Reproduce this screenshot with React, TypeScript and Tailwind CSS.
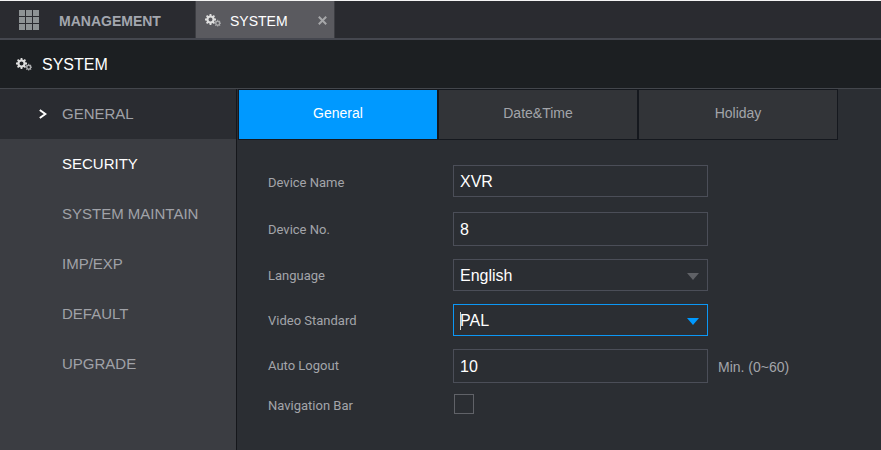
import React from "react";
import clsx from "clsx";

function gearPath(cx: number, cy: number, outer: number, inner: number, hole: number, teeth: number) {
  const step = (Math.PI * 2) / teeth;
  const point = (r: number, a: number) =>
    `${(cx + r * Math.cos(a)).toFixed(2)} ${(cy + r * Math.sin(a)).toFixed(2)}`;
  const points: string[] = [];
  for (let i = 0; i < teeth; i++) {
    const a = i * step;
    points.push(
      point(inner, a - step * 0.3),
      point(outer, a - step * 0.2),
      point(outer, a + step * 0.2),
      point(inner, a + step * 0.3),
    );
  }
  const ring = `M${cx - hole} ${cy}a${hole} ${hole} 0 1 0 ${hole * 2} 0a${hole} ${hole} 0 1 0 ${-hole * 2} 0Z`;
  return `M${points.join("L")}Z${ring}`;
}

function Gears() {
  return (
    <svg width="16" height="13" viewBox="0 0 16 13" fillRule="evenodd" aria-hidden="true" className="shrink-0">
      <path d={gearPath(5.5, 5.5, 5.6, 4.2, 2, 8)} fill="#dedede" />
      <path d={gearPath(12.7, 9.2, 3.4, 2.6, 1.2, 8)} fill="#a9aaac" />
    </svg>
  );
}

const menu = ["GENERAL", "SECURITY", "SYSTEM MAINTAIN", "IMP/EXP", "DEFAULT", "UPGRADE"];
const tabs = ["General", "Date&Time", "Holiday"];

const box = "w-full rounded-none border bg-transparent px-1.5 pt-0.5 text-base text-white outline-none";

function Row({ id, label, tall, children }: { id: string; label: string; tall?: boolean; children: React.ReactNode }) {
  return (
    <div className={clsx("flex items-start", tall ? "h-9" : "h-[34px]")}>
      <label
        htmlFor={id}
        className={clsx(
          "w-[185px] shrink-0 font-[Roboto,sans-serif] text-[13px] text-[#a3a5aa]",
          tall ? "leading-9" : "leading-[34px]",
        )}
      >
        {label}
      </label>
      {children}
    </div>
  );
}

function Select({ id, value, options, active }: { id: string; value: string; options: string[]; active?: boolean }) {
  return (
    <div className="relative w-[255px]">
      <select
        id={id}
        defaultValue={value}
        className={clsx(box, "h-8 appearance-none", active ? "border-[#0c97f5]" : "border-[#4b4e58]")}
      >
        {options.map((o) => (
          <option key={o}>{o}</option>
        ))}
      </select>
      {active && <span className="absolute top-2 left-[7px] h-[18px] w-px bg-[#d8d4cc]" />}
      <svg
        width="12"
        height="7"
        viewBox="0 0 12 7"
        aria-hidden="true"
        className={clsx("pointer-events-none absolute top-3.5 right-[9px]", active ? "text-[#0099ff]" : "text-[#5f6166]")}
      >
        <path d="M0 0H12L6 7Z" fill="currentColor" />
      </svg>
    </div>
  );
}

export default function App() {
  return (
    <div className="flex min-h-screen flex-col border-t border-[#f4f4f4] bg-[#2b2e33] font-['Liberation_Sans',Arial,sans-serif]">
      <nav className="flex h-[39px] shrink-0 border-b-2 border-[#45474f] bg-[#2a2b30]">
        <button className="flex w-[195px] items-center pl-[19px] text-sm font-bold text-[#a3a6ae]">
          <svg width="20" height="20" viewBox="0 0 20 20" fill="#8e9395" aria-hidden="true" className="mr-5 shrink-0">
            {[0, 7, 14].map((y) => [0, 7, 14].map((x) => <rect key={`${x}-${y}`} x={x} y={y} width="6" height="6" />))}
          </svg>
          <span className="pt-0.5">MANAGEMENT</span>
        </button>
        <div className="flex w-[140px] items-center border-x border-[#3c3d42] bg-[#5a5a5f] pt-0.5 pr-[7px] pl-[9px] text-white">
          <button className="flex flex-1 items-center gap-[9px] text-sm">
            <Gears />
            SYSTEM
          </button>
          <button aria-label="Close" className="text-[#a6a7a9]">
            <svg width="9" height="9" viewBox="0 0 9 9" stroke="currentColor" strokeWidth="2" aria-hidden="true">
              <path d="M.8 .8L8.2 8.2M8.2 .8L.8 8.2" />
            </svg>
          </button>
        </div>
      </nav>

      <header className="flex h-[49px] shrink-0 items-center gap-[10px] border-b border-[#43464c] bg-[#1c1f22] pl-4 text-white">
        <Gears />
        <h1 className="pt-0.5 text-base">SYSTEM</h1>
      </header>

      <div className="flex flex-1">
        <aside className="w-[237px] shrink-0 border-r border-[#15171b] bg-[#3b3d42]">
          {menu.map((item, i) => (
            <a
              key={item}
              href="#"
              className={clsx(
                "flex h-[50px] items-center pl-[39px] text-[15px]",
                i === 0 && "bg-[#2a2c31]",
                i === 1 ? "text-white" : "text-[#a0a2a8]",
              )}
            >
              <span className="w-[23px]">
                {i === 0 && (
                  <svg width="8" height="10" viewBox="0 0 8 10" fill="none" stroke="#fff" strokeWidth="2" aria-hidden="true">
                    <path d="M.8 1L6.3 5L.8 9" />
                  </svg>
                )}
              </span>
              {item}
            </a>
          ))}
        </aside>

        <main className="flex-1 pl-px">
          <div className="flex" role="tablist">
            {tabs.map((tab, i) => (
              <button
                key={tab}
                role="tab"
                aria-selected={i === 0}
                className={clsx(
                  "h-[51px] w-[200px] border border-[#15181e] pb-1 text-sm",
                  i === 0 ? "bg-[#0099ff] text-white" : "bg-[#323438] text-[#a3a5aa]",
                )}
              >
                {tab}
              </button>
            ))}
          </div>

          <form className="flex flex-col gap-[11px] pt-[25px] pl-[30px]">
            <Row id="name" label="Device Name" tall>
              <input id="name" defaultValue="XVR" className={clsx(box, "h-8 max-w-[255px] border-[#4b4e58]")} />
            </Row>
            <Row id="number" label="Device No." tall>
              <input id="number" defaultValue="8" className={clsx(box, "h-[34px] max-w-[255px] border-[#4b4e58]")} />
            </Row>
            <Row id="language" label="Language">
              <Select id="language" value="English" options={["English"]} />
            </Row>
            <Row id="standard" label="Video Standard">
              <Select id="standard" value="PAL" options={["PAL", "NTSC"]} active />
            </Row>
            <Row id="logout" label="Auto Logout">
              <input id="logout" defaultValue="10" className={clsx(box, "h-[34px] max-w-[255px] border-[#4b4e58]")} />
              <span className="pl-[10px] text-sm leading-9 whitespace-nowrap text-[#a3a5aa]">Min. (0~60)</span>
            </Row>
            <div className="flex h-6 items-start">
              <label htmlFor="navbar" className="w-[186px] shrink-0 font-[Roboto,sans-serif] text-[13px] leading-6 text-[#a3a5aa]">
                Navigation Bar
              </label>
              <input id="navbar" type="checkbox" className="size-5 appearance-none border border-[#606268]" />
            </div>
          </form>
        </main>
      </div>
    </div>
  );
}
